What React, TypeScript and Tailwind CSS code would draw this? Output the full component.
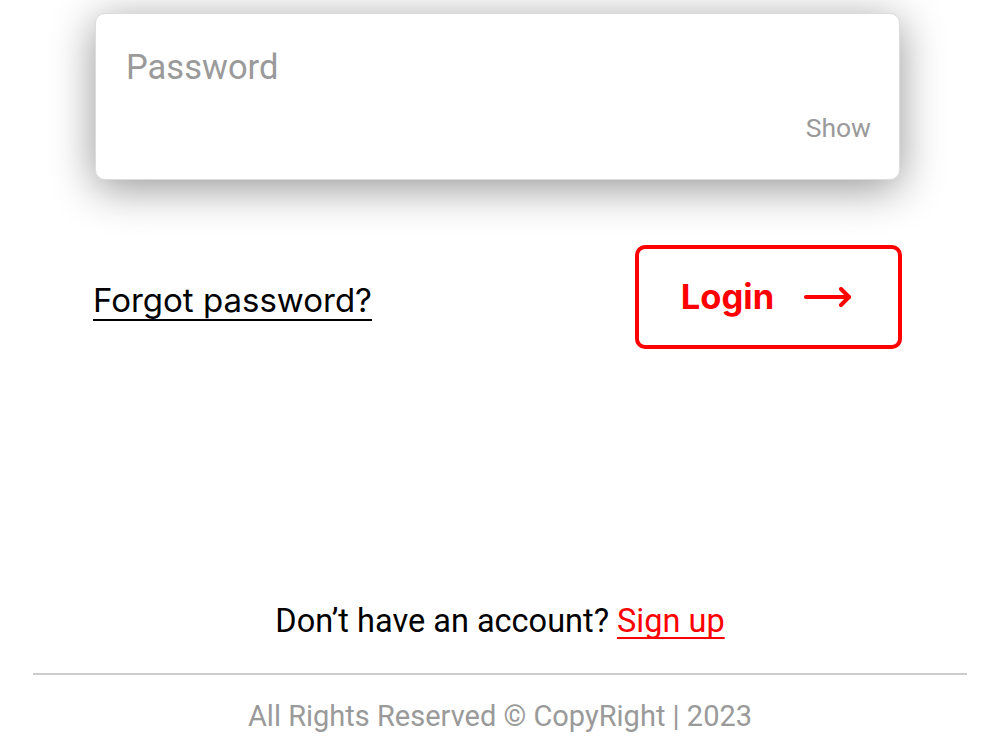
import { useState } from 'react';

// Bottom half of the login screen: password field, actions and footer.
export default function App() {
  const [show, setShow] = useState(false);

  return (
    <div className="min-h-[750px] w-[1000px] bg-white overflow-hidden flex flex-col font-['Roboto',sans-serif]">
      <div className="w-[807px] ml-[95px] mt-[13px]">
        {/* Password card */}
        <div className="w-[805px] h-[167px] rounded-[10px] bg-white border border-[#dcdcdc] shadow-[0_8px_44px_rgba(0,0,0,0.42)] pl-[30px] pr-[28px] pt-[30px] pb-[36px] flex flex-col">
          <input
            type={show ? 'text' : 'password'}
            placeholder="Password"
            className="w-full bg-transparent outline-none text-[34.5px] leading-[46px] text-[#555] placeholder:text-[#9a9a9a]"
          />
          <div className="mt-auto flex justify-end">
            <button
              onClick={() => setShow(!show)}
              className="text-[26.5px] leading-[30px] text-[#9a9a9a]"
            >
              Show
            </button>
          </div>
        </div>

        {/* Actions */}
        <div className="mt-[65px] flex items-center justify-between">
          <a
            href="#"
            className="font-['Inter',sans-serif] text-[33px] leading-[38px] text-black underline decoration-2 underline-offset-[7px] [text-decoration-skip-ink:none] -ml-[2px] mt-[6px]"
          >
            Forgot password?
          </a>
          <button className="w-[267px] h-[104px] rounded-[10px] border-[4px] border-[#ff0000] flex items-center justify-center gap-[30px] pr-[4px] text-[#ff0000]">
            <span className="font-['Inter',sans-serif] font-bold text-[34.5px] leading-none">Login</span>
            <svg width="48" height="20" viewBox="0 0 48 20" fill="none" stroke="currentColor" strokeWidth="4" strokeLinecap="round" strokeLinejoin="round">
              <path d="M2 10h43" />
              <path d="M37 2l8 8-8 8" />
            </svg>
          </button>
        </div>
      </div>

      {/* Sign up prompt */}
      <p className="mt-[253px] text-center text-[32.5px] leading-[38px] text-black">
        Don’t have an account?{' '}
        <a href="#" className="text-[#ff0000] underline decoration-2 underline-offset-[5px] [text-decoration-skip-ink:none]">
          Sign up
        </a>
      </p>

      {/* Footer */}
      <div className="mt-[33px] mx-[33px] border-t-2 border-[#cccccc]" />
      <p className="mt-[24px] text-center text-[29px] leading-[34px] text-[#9a9a9a]">
        All Rights Reserved © CopyRight | 2023
      </p>
    </div>
  );
}
